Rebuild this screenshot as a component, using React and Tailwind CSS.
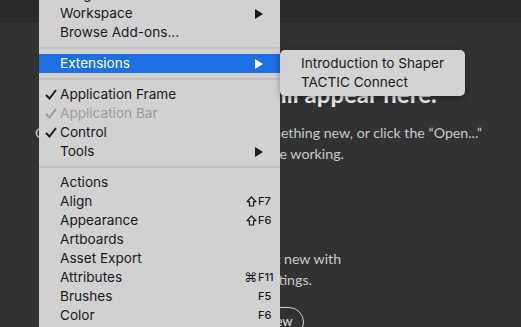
import React from 'react';

const menuFont = { fontFamily: 'Inter, "Noto Sans", sans-serif' };

const Arrow = ({ white }) => (
    <svg width="8" height="10" viewBox="0 0 8 10" className="absolute right-[17px] top-[5px]">
        <path d="M0 0 L8 5 L0 10 Z" fill={white ? '#ffffff' : '#1a1a1a'} />
    </svg>
);

const Check = ({ dim }) => (
    <svg width="12" height="11" viewBox="0 0 12 11" className="absolute left-[6px] top-[4px]">
        <path d="M1 6 L4.5 9.5 L11 1" fill="none" stroke={dim ? '#9c9c9c' : '#1a1a1a'} strokeWidth="1.9" />
    </svg>
);

const Shift = () => (
    <svg width="11" height="11" viewBox="0 0 11 11">
        <path d="M5.5 1 L10 5.6 L7.6 5.6 L7.6 10 L3.4 10 L3.4 5.6 L1 5.6 Z" fill="none" stroke="#1a1a1a" strokeWidth="1.2" strokeLinejoin="round" />
    </svg>
);

const Row = ({ label, check, dim, arrow, mod, keyName, active }) => (
    <div
        className={`relative h-[19px] flex items-center pl-[21px] text-[13.6px] ${
            active ? 'bg-[#1d6fe3] text-white' : dim ? 'text-[#9c9c9c]' : 'text-[#1a1a1a]'
        }`}
    >
        {check && <Check dim={dim} />}
        <span className="flex-1 leading-none">{label}</span>
        {keyName && (
            <span className="flex items-center">
                <span className="w-[13px] flex justify-end pr-[1px] text-[13px] leading-none" style={{ fontFamily: '"DejaVu Sans", sans-serif' }}>
                    {mod === 'shift' && <Shift />}
                    {mod === 'cmd' && '⌘'}
                </span>
                <span className="w-[22px] text-[11px] font-medium leading-none">{keyName}</span>
            </span>
        )}
        {arrow && <Arrow white={active} />}
    </div>
);

const Sep = () => <div className="h-[2px] my-[5px] bg-[#c2c2c2]" />;

export default function App() {
    return (
        <div className="relative w-[521px] h-[327px] overflow-hidden bg-[#323232]">
            {/* background start screen */}
            <div className="h-[23px] bg-[#2a2a2a]" />
            <div className="text-center pr-[4px]" style={{ fontFamily: 'Lato, "Open Sans", sans-serif' }}>
                <h1 className="mt-[56px] text-[24px] leading-[30px] font-bold text-[#ececec] whitespace-nowrap pl-[4px]">
                    Your recent files will appear here.
                </h1>
                <p className="mt-[13px] text-[14.2px] leading-[21px] text-[#c9c9c9] whitespace-nowrap">
                    Click “Create New...” above to start something new, or click the “Open...”
                    <br />
                    to see what you're working.
                </p>
                <p className="mt-[84px] pl-[6px] text-[14.2px] leading-[21px] text-[#c9c9c9]">
                    Start something new with
                    <br />
                    custom settings.
                </p>
                <div className="mt-[17px] mx-auto w-[90px] h-[30px] rounded-full border-[1.5px] border-[#d0d0d0] text-[13px] leading-[27px] text-[#e0e0e0]">
                    Create New
                </div>
            </div>

            {/* Window menu */}
            <div className="absolute left-[39px] top-[-15px] w-[241px] bg-[#d1d1d1]" style={menuFont}>
                <Row label="Image Trace" />
                <Row label="Workspace" arrow />
                <Row label="Browse Add-ons..." />
                <Sep />
                <Row label="Extensions" arrow active />
                <Sep />
                <Row label="Application Frame" check />
                <Row label="Application Bar" check dim />
                <Row label="Control" check />
                <Row label="Tools" arrow />
                <Sep />
                <Row label="Actions" />
                <Row label="Align" mod="shift" keyName="F7" />
                <Row label="Appearance" mod="shift" keyName="F6" />
                <Row label="Artboards" />
                <Row label="Asset Export" />
                <Row label="Attributes" mod="cmd" keyName="F11" />
                <Row label="Brushes" keyName="F5" />
                <Row label="Color" keyName="F6" />
                <Row label="Color Guide" />
            </div>

            {/* Extensions submenu */}
            <div
                className="absolute left-[280px] top-[50px] w-[185px] h-[46px] pt-[4px] rounded-[5px] bg-[#d3d3d3] shadow-[0_2px_6px_rgba(0,0,0,0.35)]"
                style={menuFont}
            >
                <div className="h-[19px] flex items-center pl-[21px] text-[13.6px] text-[#1a1a1a]">Introduction to Shaper</div>
                <div className="h-[19px] flex items-center pl-[21px] text-[13.6px] text-[#1a1a1a]">TACTIC Connect</div>
            </div>
        </div>
    );
}
